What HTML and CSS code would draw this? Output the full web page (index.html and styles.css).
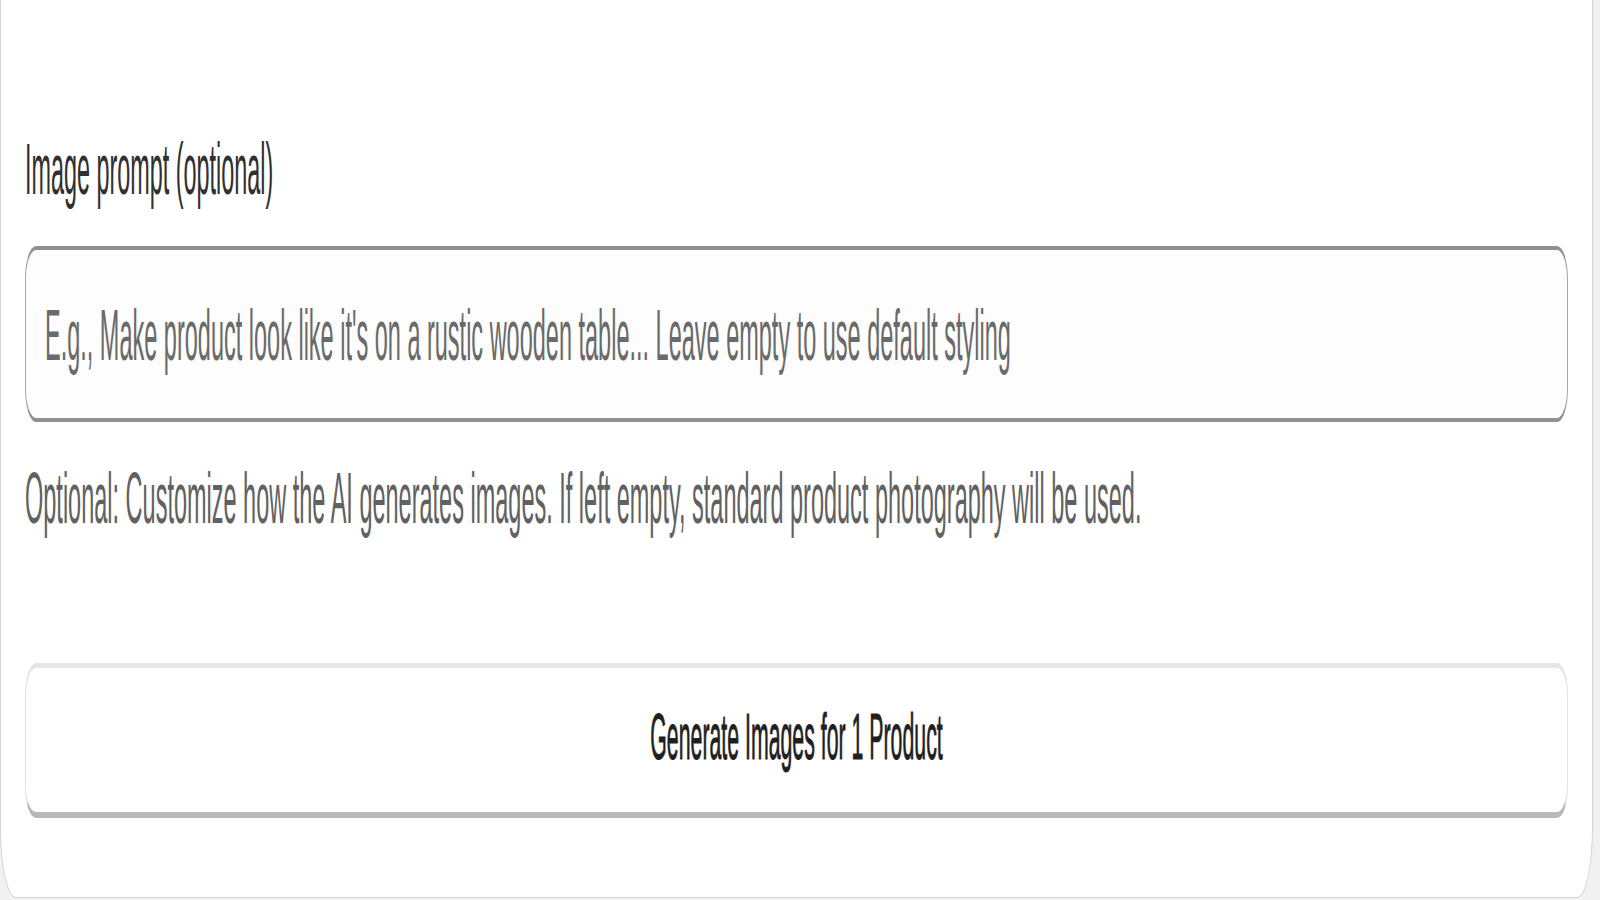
FILE: index.html
```html
<!DOCTYPE html>
<html lang="en">
<head>
<meta charset="utf-8">
<title>Image prompt</title>
<link rel="stylesheet" href="styles.css">
</head>
<body>
<div class="page">
  <div class="card">
    <div class="field">
      <div class="label-wrap"><span class="label">Image prompt (optional)</span></div>
      <div class="input"><div class="ph-wrap"><span class="placeholder">E.g., Make product look like it's on a rustic wooden table... Leave empty to use default styling</span></div></div>
      <div class="help-wrap"><span class="help">Optional: Customize how the AI generates images. If left empty, standard product photography will be used.</span></div>
    </div>
    <div class="button"><div class="btn-wrap"><span class="btn-text">Generate Images for 1 Product</span></div></div>
  </div>
</div>
</body>
</html>
```
FILE: styles.css
```css
html, body {
  margin: 0;
  padding: 0;
  background: #f1f1f1;
  font-family: "Liberation Sans", Arial, sans-serif;
}

.page {
  width: 1600px;
  height: 900px;
  overflow: hidden;
}

.card {
  width: 1593px;
  box-sizing: border-box;
  background: #ffffff;
  border: 1px solid #d4d4d4;
  border-top: none;
  border-radius: 0 0 16px 16px / 0 0 70px 70px;
  padding: 136px 24px 79px 24px;
}

.label-wrap,
.help-wrap,
.ph-wrap,
.btn-wrap {
  display: flex;
  white-space: nowrap;
}

.label-wrap { height: 70px; }
.label {
  font-size: 23.4px;
  line-height: 1;
  color: #303030;
  transform: scaleY(3.05);
  transform-origin: 0 0;
}

.input {
  margin-top: 40px;
  background: #fdfdfd;
  border: 1px solid #a8a8a8;
  border-top: 4px solid #8e918f;
  border-bottom: 4px solid #8e918f;
  border-radius: 11px / 33px;
  padding: 52px 18px 45px 19px;
}

.ph-wrap { height: 71px; }
.placeholder {
  font-size: 23.5px;
  line-height: 1;
  color: #6a6a6a;
  transform: scaleY(3.05);
  transform-origin: 0 0;
}

.help-wrap { height: 71px; margin-top: 43px; }
.help {
  font-size: 23.5px;
  line-height: 1;
  color: #616161;
  transform: scaleY(3.05);
  transform-origin: 0 0;
}

.button {
  margin-top: 127px;
  background: #ffffff;
  border: 1px solid #e3e3e3;
  border-top: 5px solid #e6e6e6;
  border-bottom: 6px solid #b8b8b8;
  border-radius: 11px / 32px;
  padding: 40px 16px 40px 16px;
}

.btn-wrap { height: 64px; justify-content: center; }
.btn-text {
  font-size: 21.3px;
  font-weight: 400;
  line-height: 1;
  color: #1f1f1f;
  -webkit-text-stroke: 0.35px #1f1f1f;
  transform: scaleY(3.02);
  transform-origin: 50% 0;
}
```
